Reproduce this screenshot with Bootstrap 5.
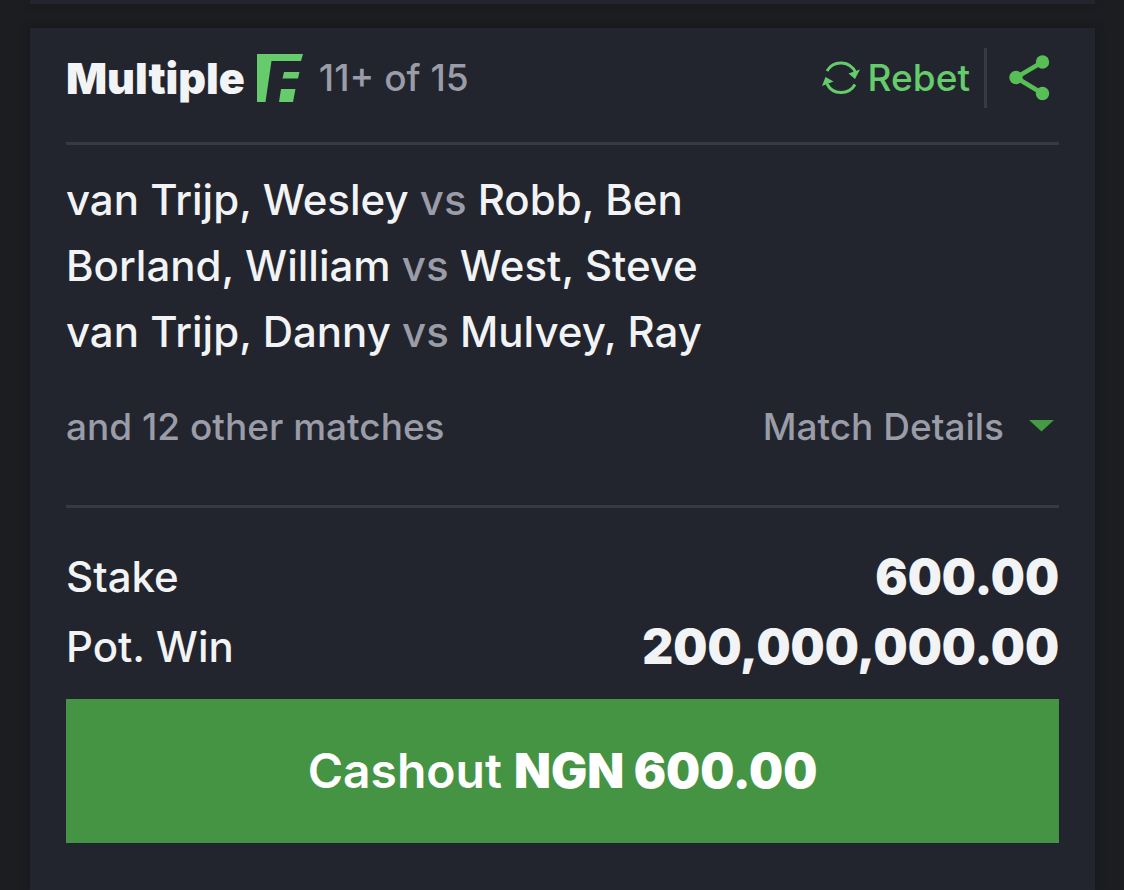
<!DOCTYPE html>
<html lang="en">
<head>
<meta charset="utf-8">
<meta name="viewport" content="width=device-width, initial-scale=1">
<title>Bet history</title>
<link href="https://cdn.jsdelivr.net/npm/bootstrap@5.3.0/dist/css/bootstrap.min.css" rel="stylesheet">
<style>
body{background:#1c1d21;color:#f2f3f5;font-family:Inter,"Liberation Sans",sans-serif}
.feed{padding:0 29px 0 30px}
.slip-edge{height:4px;background:#22252d;box-shadow:0 0 10px rgba(0,0,0,.25)}
.slip{background:#22252d;min-height:calc(100vh - 28px);padding:0 36px;box-shadow:0 0 10px rgba(0,0,0,.25)}
.rule{height:3px;margin:0;border:0;opacity:1;background:#373a42}
.muted{color:#9a9ca8}
.medium{font-weight:500}
.semi{font-weight:600}
.heavy{font-weight:900}
.slip-title{font-size:43px;line-height:60px;margin:0 12px 0 0}
.slip-head{padding:20px 0 34px}
.note{font-size:37px;line-height:44px}
.rebet{color:#65cb6b}
.rebet:hover{color:#8be08f}
.divider{width:3px;height:60px;margin:0 22px 0 14px;background:#373a42}
.share{margin-right:9px}
.matches{font-size:42px;line-height:66px;padding-top:22px}
.more{padding:40px 0 56px}
.caret{margin:0 5px 2px 25px}
.totals{padding:34px 0 17px;font-size:42px;line-height:70px}
.amount{font-size:48px}
.cashout,.cashout:hover{background:#459444;color:#fff;height:144px;font-size:48px}
</style>
</head>
<body>
<div class="feed">
  <div class="slip-edge mb-4"></div>
  <main class="slip">
    <header class="slip-head d-flex align-items-center justify-content-between">
      <div class="d-flex align-items-center">
        <h1 class="slip-title heavy">Multiple</h1>
        <svg width="46" height="48" viewBox="0 0 46 48" fill="#65cb6b" role="img" aria-label="Flex"><path d="M0 0H46L44 7H14.500L8.500 48H0ZM27 18H42.500L41 24.500H25.500ZM24 35H38.500L36 48H22Z"/></svg>
        <span class="note muted medium ms-3">11+ of 15</span>
      </div>
      <div class="d-flex align-items-center">
        <button type="button" class="btn border-0 p-0 note rebet medium d-flex align-items-center">
          <svg class="me-2" width="38" height="36" viewBox="0 0 38 36" aria-hidden="true"><path d="M5 11A16 16 0 0 1 33.500 12.500M33 24.500A16 16 0 0 1 5 24" fill="none" stroke="currentColor" stroke-width="3"/><path d="M26.500 13.500L38 9.500L33 19ZM0 26L3.500 17L11.500 21.500Z" fill="currentColor"/></svg>Rebet
        </button>
        <div class="divider"></div>
        <button type="button" class="btn border-0 p-0 share d-flex" aria-label="Share">
          <svg width="41" height="46" viewBox="0 0 41 46" fill="#57bf55"><path d="M33.500 7L7 22.500L33.500 38.500" fill="none" stroke="#57bf55" stroke-width="4.500"/><circle cx="33.500" cy="7" r="6.700"/><circle cx="7" cy="22.500" r="6.700"/><circle cx="33.500" cy="38.500" r="6.700"/></svg>
        </button>
      </div>
    </header>
    <hr class="rule">
    <ul class="list-unstyled matches medium m-0">
      <li>van Trijp, Wesley <span class="muted">vs</span> Robb, Ben</li>
      <li>Borland, William <span class="muted">vs</span> West, Steve</li>
      <li>van Trijp, Danny <span class="muted">vs</span> Mulvey, Ray</li>
    </ul>
    <div class="more d-flex justify-content-between note muted medium">
      <span>and 12 other matches</span>
      <button type="button" class="btn border-0 p-0 note muted medium d-flex align-items-center">Match Details
        <svg class="caret" width="25" height="12" viewBox="0 0 25 12" aria-hidden="true"><path d="M0 0H25L12.500 11.500Z" fill="#459b44"/></svg>
      </button>
    </div>
    <hr class="rule">
    <dl class="totals m-0">
      <div class="d-flex justify-content-between"><dt class="medium">Stake</dt><dd class="amount heavy m-0">600.00</dd></div>
      <div class="d-flex justify-content-between"><dt class="medium">Pot. Win</dt><dd class="amount heavy m-0">200,000,000.00</dd></div>
    </dl>
    <button type="button" class="btn cashout semi border-0 rounded-0 w-100">Cashout <span class="heavy">NGN 600.00</span></button>
  </main>
</div>
</body>
</html>
